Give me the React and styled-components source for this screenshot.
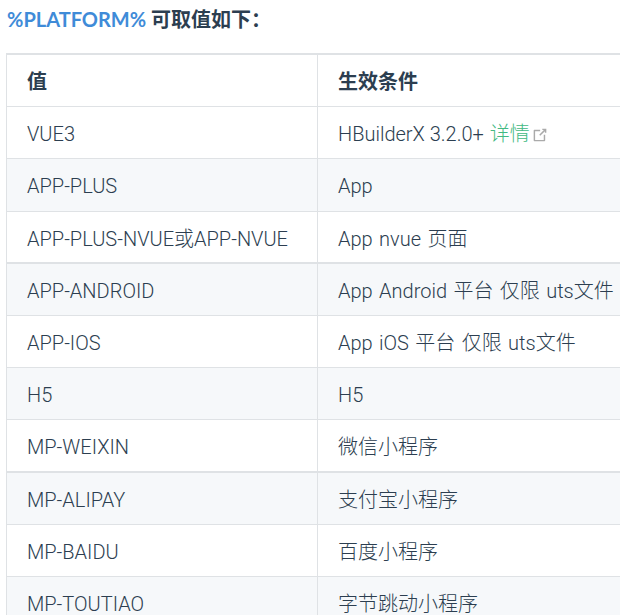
import React from 'react';
import styled, { createGlobalStyle } from 'styled-components';

const GlobalStyle = createGlobalStyle`
  html, body {
    margin: 0;
    padding: 0;
    width: 620px;
    height: 615px;
    overflow: hidden;
    background: #ffffff;
  }
`;

const Page = styled.div`
  padding: 5px 0 0 6px;
  font-family: "Roboto", "Noto Sans CJK SC", sans-serif;
  font-size: 20px;
  font-weight: 300;
  line-height: 27.2px;
  color: #2c3e50;
`;

const Intro = styled.p`
  margin: 0 0 20px 1px;
  font-family: "Lato", "Noto Sans CJK SC", sans-serif;
  font-size: 20px;
  line-height: 28px;
  font-weight: 700;
  color: #2c3e50;
`;

const Token = styled.span`
  color: #3f8bd8;
`;

const Table = styled.table`
  border-collapse: collapse;
  table-layout: fixed;
  width: 700px;
  border-top: 2px solid #dfe2e5;
`;

const Row = styled.tr`
  background: ${({ $striped }) => ($striped ? '#f6f8fa' : '#ffffff')};
`;

const HeadCell = styled.th`
  box-sizing: border-box;
  border: 1px solid #dfe2e5;
  padding: 14px 20px 10px;
  text-align: left;
  font-weight: 700;
  font-size: 20px;
  width: ${({ $width }) => $width};
`;

const Cell = styled.td`
  border: 1px solid #dfe2e5;
  border-bottom-width: ${({ $heavy }) => ($heavy ? '2px' : '1px')};
  padding: 14px 20px ${({ $heavy }) => ($heavy ? '9px' : '10px')};
  white-space: nowrap;
  word-spacing: 1.5px;
`;

const Version = styled.span`
  word-spacing: 0;
`;

const DocLink = styled.a`
  margin-left: 1px;
  color: #42b983;
  text-decoration: none;
`;

const ExternalIcon = styled.svg`
  width: 18px;
  height: 18px;
  margin-left: 1px;
  vertical-align: -3px;
  color: #aaaaaa;
`;

const rows = [
  ['VUE3', null],
  ['APP-PLUS', 'App'],
  ['APP-PLUS-NVUE或APP-NVUE', 'App nvue 页面'],
  ['APP-ANDROID', 'App Android 平台 仅限 uts文件'],
  ['APP-IOS', 'App iOS 平台 仅限 uts文件'],
  ['H5', 'H5'],
  ['MP-WEIXIN', '微信小程序'],
  ['MP-ALIPAY', '支付宝小程序'],
  ['MP-BAIDU', '百度小程序'],
  ['MP-TOUTIAO', '字节跳动小程序'],
];

export default function App() {
  return (
    <Page>
      <GlobalStyle />
      <Intro>
        <Token>%PLATFORM%</Token> 可取值如下：
      </Intro>
      <Table>
        <thead>
          <Row>
            <HeadCell $width="311px">值</HeadCell>
            <HeadCell>生效条件</HeadCell>
          </Row>
        </thead>
        <tbody>
          {rows.map(([value, condition], index) => {
            const heavy = index === 2 || index === 6;
            return (
              <Row key={value} $striped={index % 2 === 1}>
                <Cell $heavy={heavy}>{value}</Cell>
                <Cell $heavy={heavy}>
                  {condition || (
                    <>
                      <Version>HBuilderX 3.2.0+ </Version>
                      <DocLink href="#">详情</DocLink>
                      <ExternalIcon viewBox="0 0 100 100">
                        <path
                          fill="currentColor"
                          d="M18.8,85.1h56l0,0c2.2,0,4-1.8,4-4v-32h-8v28h-48v-48h28v-8h-32l0,0c-2.2,0-4,1.8-4,4v56C14.8,83.3,16.6,85.1,18.8,85.1z"
                        />
                        <polygon
                          fill="currentColor"
                          points="45.7,48.7 51.3,54.3 77.2,28.5 77.2,37.2 85.2,37.2 85.2,14.9 62.8,14.9 62.8,22.9 71.5,22.9"
                        />
                      </ExternalIcon>
                    </>
                  )}
                </Cell>
              </Row>
            );
          })}
        </tbody>
      </Table>
    </Page>
  );
}
